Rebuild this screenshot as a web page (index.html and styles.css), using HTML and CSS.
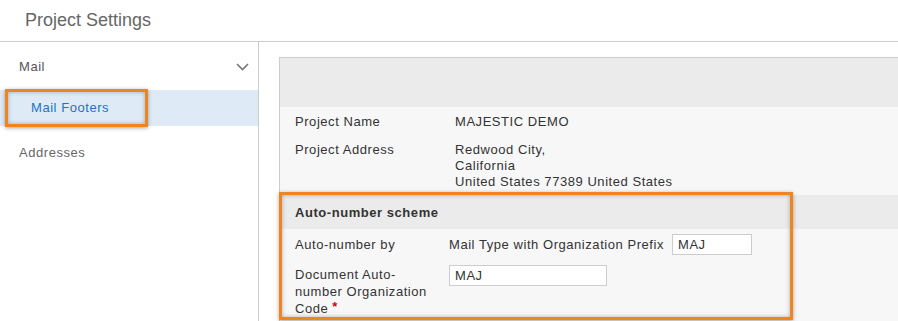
FILE: index.html
```html
<!DOCTYPE html>
<html lang="en">
<head>
    <meta charset="UTF-8">
    <title>Project Settings</title>
    <link rel="stylesheet" href="styles.css">
</head>
<body>
    <div class="page-header">Project Settings</div>
    <div class="layout">
        <div class="sidebar">
            <div class="nav-group">
                <span>Mail</span>
                <svg class="chevron" width="13" height="8" viewBox="0 0 13 8">
                    <polyline points="1,1 6.5,6.5 12,1" fill="none" stroke="#777" stroke-width="1.6"/>
                </svg>
            </div>
            <div class="nav-item selected">
                Mail Footers
                <div class="callout callout-nav"></div>
            </div>
            <div class="nav-group-plain">Addresses</div>
        </div>
        <div class="main">
            <div class="panel">
                <div class="panel-head"></div>
                <div class="panel-body">
                    <div class="row">
                        <div class="label">Project Name</div>
                        <div class="value">MAJESTIC DEMO</div>
                    </div>
                    <div class="row">
                        <div class="label">Project Address</div>
                        <div class="value">Redwood City,<br>California<br>United States 77389 United States</div>
                    </div>
                    <div class="section">
                        <div class="section-head">Auto-number scheme</div>
                        <div class="row row-field">
                            <div class="label">Auto-number by</div>
                            <div class="value field-inline">
                                <span>Mail Type with Organization Prefix</span>
                                <input class="text-input short" type="text" value="MAJ">
                            </div>
                        </div>
                        <div class="row row-field top">
                            <div class="label label-wrap">Document Auto-number Organization Code<span class="req">*</span></div>
                            <div class="value">
                                <input class="text-input long" type="text" value="MAJ">
                            </div>
                        </div>
                        <div class="callout callout-section"></div>
                    </div>
                </div>
            </div>
        </div>
    </div>
</body>
</html>
```

FILE: styles.css
```css
body {
    margin: 0;
    font-family: "Liberation Sans", Arial, sans-serif;
    font-size: 13px;
    letter-spacing: 0.55px;
    color: #333;
    background: #fff;
    height: 321px;
    overflow: hidden;
}
.page-header {
    height: 41px;
    line-height: 40px;
    padding-left: 25px;
    font-size: 18px;
    letter-spacing: 0;
    color: #666;
    border-bottom: 1px solid #ccc;
}
.layout {
    display: flex;
    height: 279px;
}
.sidebar {
    width: 258px;
    border-right: 1px solid #ccc;
    flex-shrink: 0;
}
.nav-group {
    display: flex;
    justify-content: space-between;
    align-items: center;
    height: 48px;
    padding: 0 9px 0 19px;
    color: #555;
}
.chevron {
    margin-top: 2px;
}
.nav-item {
    position: relative;
    height: 36px;
    line-height: 36px;
    padding-left: 31px;
    background: #deebf7;
    color: #1f72c4;
}
.nav-group-plain {
    height: 52px;
    line-height: 53px;
    padding-left: 19px;
    color: #666;
}
.callout {
    position: absolute;
    border: 3px solid #f0851f;
    box-shadow: 0 1px 4px rgba(0, 0, 0, 0.35), inset 0 0 4px rgba(0, 0, 0, 0.3);
    box-sizing: border-box;
    pointer-events: none;
}
.callout-nav {
    top: -1px;
    left: 5px;
    width: 143px;
    height: 38px;
}
.main {
    flex: 1;
    padding: 15px 0 0 20px;
    overflow: hidden;
}
.panel {
    border: 1px solid #ccc;
    border-right: none;
    border-bottom: none;
    height: 100%;
    background: #f7f7f7;
}
.panel-head {
    height: 49px;
    background: #ebebeb;
}
.row {
    display: flex;
    padding: 7px 0 5px 15px;
    line-height: 16px;
}
.label {
    width: 160px;
    flex-shrink: 0;
}
.section {
    position: relative;
}
.section-head {
    height: 34px;
    line-height: 35px;
    padding-left: 15px;
    background: #ebebeb;
    font-weight: bold;
}
.row-field {
    padding: 5px 0 5px 15px;
    align-items: center;
}
.row-field .label {
    width: 154px;
}
.row-field.top {
    align-items: flex-start;
}
.row-field .label-wrap {
    width: 145px;
    margin-right: 9px;
    line-height: 17px;
    padding-top: 1px;
}
.field-inline {
    display: flex;
    align-items: center;
    gap: 8px;
}
.text-input {
    box-sizing: border-box;
    height: 21px;
    border: 1px solid #ccc;
    background: #fff;
    font-family: "Liberation Sans", Arial, sans-serif;
    font-size: 13px;
    letter-spacing: 0.55px;
    color: #333;
    padding: 0 5px;
    margin: 0;
}
.short {
    width: 80px;
}
.long {
    width: 158px;
}
.req {
    color: #d0021b;
    font-weight: bold;
    margin-left: 4px;
    vertical-align: 2px;
    line-height: 10px;
}
.callout-section {
    top: -3px;
    left: -1px;
    width: 514px;
    height: 128px;
}
```
